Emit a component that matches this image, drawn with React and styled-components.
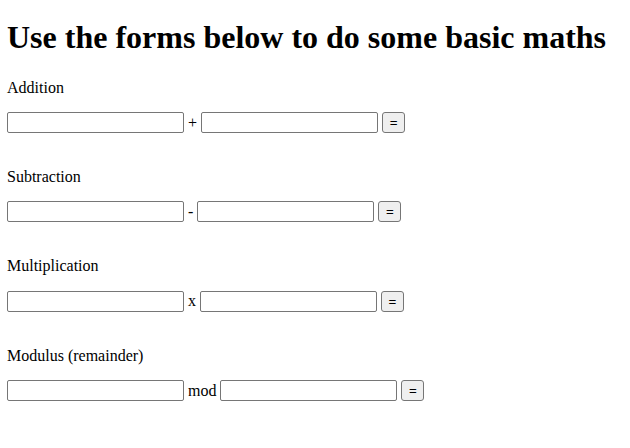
import styled, { createGlobalStyle } from "styled-components";

const GlobalStyle = createGlobalStyle`
    html, body {
        margin: 0;
        padding: 0;
        background: #ffffff;
    }
    body {
        font-family: "Liberation Serif", "Times New Roman", serif;
        color: #000000;
    }
`;

const Page = styled.main`
    padding: 19px 7px 0;
`;

const Heading = styled.h1`
    margin: 0 0 22.5px;
    font-size: 32px;
    line-height: 37px;
    font-weight: bold;
`;

const Forms = styled.div`
    display: flex;
    flex-direction: column;
    gap: 34.9px;
`;

const Form = styled.form`
    margin: 0;
`;

const Label = styled.p`
    margin: 0 0 15.5px;
    font-size: 16px;
    line-height: 18px;
`;

const Row = styled.div`
    display: flex;
    align-items: center;
    gap: 4px;
    height: 21px;
    font-size: 16px;
`;

const NumberInput = styled.input.attrs({ type: "text" })`
    box-sizing: border-box;
    width: 177px;
    height: 21px;
    margin: 0;
    padding: 1px 2px;
    border: 1px solid #767676;
    border-radius: 2px;
    background: #ffffff;
    font-family: "Liberation Sans", Arial, sans-serif;
    font-size: 13.33px;
`;

const Operator = styled.span`
    font-size: 16px;
    line-height: 18px;
`;

const EqualsButton = styled.button.attrs({ type: "button" })`
    box-sizing: border-box;
    width: 23px;
    height: 21px;
    margin: 0;
    padding: 1px 6px;
    border: 1px solid #767676;
    border-radius: 3px;
    background: #efefef;
    color: #000000;
    font-family: "Liberation Sans", Arial, sans-serif;
    font-size: 13.33px;
    line-height: 1;
`;

const sums = [
    { label: "Addition", op: "+" },
    { label: "Subtraction", op: "-" },
    { label: "Multiplication", op: "x" },
    { label: "Modulus (remainder)", op: "mod" },
];

export default function App() {
    return (
        <>
            <GlobalStyle />
            <Page>
                <Heading>Use the forms below to do some basic maths</Heading>
                <Forms>
                    {sums.map((s) => (
                        <Form key={s.label} onSubmit={(e) => e.preventDefault()}>
                            <Label>{s.label}</Label>
                            <Row>
                                <NumberInput />
                                <Operator>{s.op}</Operator>
                                <NumberInput />
                                <EqualsButton>=</EqualsButton>
                            </Row>
                        </Form>
                    ))}
                </Forms>
            </Page>
        </>
    );
}
